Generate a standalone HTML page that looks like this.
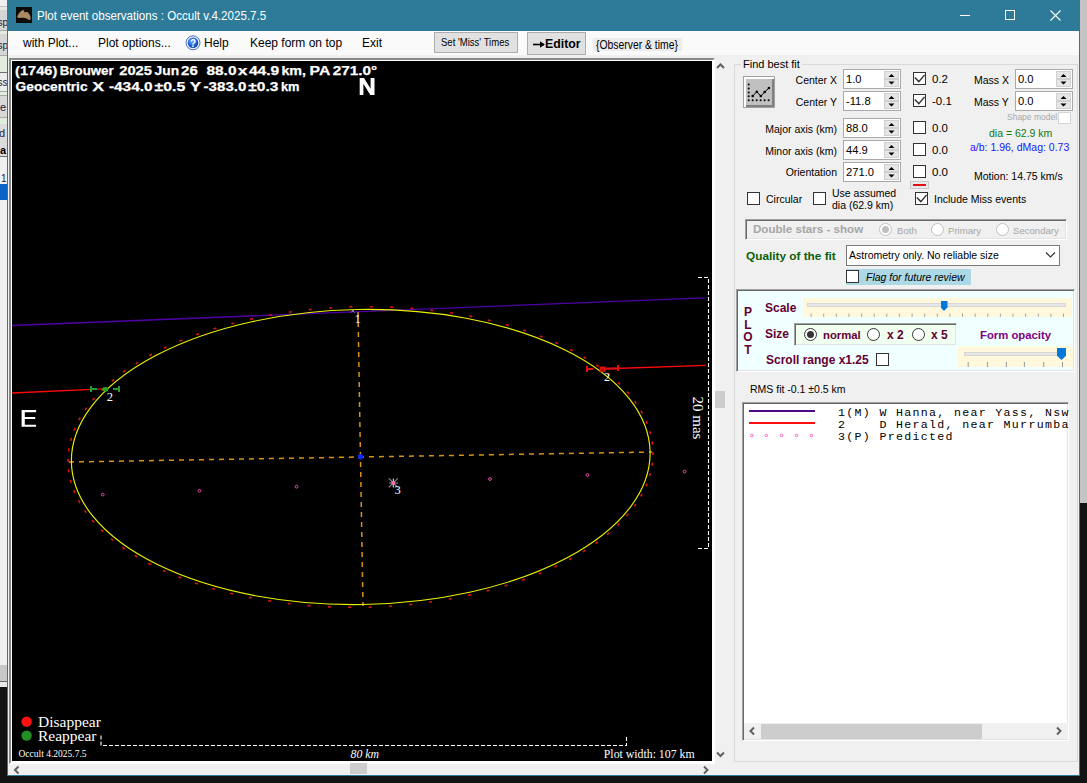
<!DOCTYPE html>
<html><head><meta charset="utf-8">
<style>
*{box-sizing:border-box;margin:0;padding:0}
html,body{width:1087px;height:783px;overflow:hidden;background:#131313;font-family:"Liberation Sans",sans-serif;}
.a{position:absolute;white-space:pre;line-height:1}
.lbl{position:absolute;white-space:pre;font-size:10.5px;color:#000;line-height:12px}
.nud{position:absolute;background:#fff;border:1px solid #a9a9a9;width:58px;height:20px}
.nud .t{position:absolute;left:2px;top:3px;font-size:11.2px;line-height:13px;color:#000}
.nud .sp{position:absolute;right:1px;top:1px;width:15px;height:16px}
.nud .sp div{position:absolute;left:0;width:15px;height:8px;background:#e6e6e6;border:1px solid #d0d0d0}
.cb{position:absolute;width:13px;height:13px;border:1px solid #333;background:#fff}

.f3d{border:1px solid;border-color:#a0a0a0 #fff #fff #a0a0a0;box-shadow:inset 1px 1px 0 #696969,inset -1px -1px 0 #e3e3e3}
.rb{position:absolute;width:13px;height:13px;border-radius:50%;border:1px solid #333;background:#fff}
</style></head><body>

<!-- left background window strip -->
<div class="a" style="left:0;top:0;width:7px;height:687px;background:#efefef;overflow:hidden">
 <div class="a" style="left:0;top:6px;width:7px;height:1px;background:#c4c4c4"></div>
 <div class="a" style="left:0;top:7px;width:7px;height:3px;background:#e2ede0"></div>
 <div class="a" style="left:0;top:10px;width:7px;height:20px;background:#d6d6d6"></div>
 <div class="a" style="left:-2.5px;top:18px;font-size:10px;color:#202040">sp</div>
 <div class="a" style="left:0;top:30px;width:7px;height:1px;background:#a8a8a8"></div>
 <div class="a" style="left:0;top:31px;width:7px;height:3px;background:#e2ede0"></div>
 <div class="a" style="left:0;top:34px;width:7px;height:21px;background:#d6d6d6"></div>
 <div class="a" style="left:-2.5px;top:41px;font-size:10px;color:#202040">sp</div>
 <div class="a" style="left:0;top:55px;width:7px;height:1px;background:#a8a8a8"></div>
 <div class="a" style="left:0;top:56px;width:7px;height:16px;background:#e2ede0"></div>
 <div class="a" style="left:0;top:72px;width:7px;height:1px;background:#707070"></div>
 <div class="a" style="left:0;top:73px;width:7px;height:18px;background:#ececec"></div>
 <div class="a" style="left:-2.5px;top:78px;font-size:10px;color:#202040">ss</div>
 <div class="a" style="left:0;top:91px;width:7px;height:1px;background:#a8a8a8"></div>
 <div class="a" style="left:0;top:92px;width:7px;height:3px;background:#e2ede0"></div>
 <div class="a" style="left:0;top:95px;width:7px;height:1px;background:#a8a8a8"></div>
 <div class="a" style="left:0;top:96px;width:7px;height:21px;background:#d8d8d8"></div>
 <div class="a" style="left:0;top:102px;font-size:11px;color:#202040">e</div>
 <div class="a" style="left:0;top:117px;width:7px;height:1px;background:#a8a8a8"></div>
 <div class="a" style="left:0;top:118px;width:7px;height:6px;background:#e2ede0"></div>
 <div class="a" style="left:0;top:124px;width:7px;height:32px;background:#dcdcdc"></div>
 <div class="a" style="left:-1px;top:128px;font-size:11px;color:#202040">d</div>
 <div class="a" style="left:0;top:145px;font-size:11px;font-weight:bold;color:#000">a</div>
 <div class="a" style="left:0;top:156px;width:7px;height:1px;background:#707070"></div>
 <div class="a" style="left:1px;top:174px;font-size:10px;color:#202040">1</div>
 <div class="a" style="left:0;top:184px;width:7px;height:16px;background:#0a64c8"></div>
 <div class="a" style="left:0;top:665px;width:7px;height:16px;background:#c8c8c8"></div>
 <div class="a" style="left:0;top:681px;width:7px;height:1px;background:#606070"></div>
 <div class="a" style="left:0;top:682px;width:7px;height:5px;background:#e8e8e8"></div>
</div>

<!-- right gray strip -->
<div class="a" style="left:1080px;top:0;width:7px;height:503px;background:#c4c4c4"></div>

<!-- window -->
<div class="a" style="left:7px;top:0;width:1073px;height:776px;background:#f0f0f0;border:1px solid #2e7b99;border-top:none"></div>
<!-- title bar -->
<div class="a" style="left:7px;top:0;width:1073px;height:31px;background:#2e7b99"></div>
<div class="a" style="left:16px;top:7px;width:16px;height:16px;background:#0e0c08"></div>
<svg class="a" style="left:16px;top:7px" width="16" height="16"><path d="M1.1 9.8C2 7 4.5 4 7 3 8 3 8.2 5 8.8 5.4 9.5 5 10.5 4.6 11.6 5.2 13.5 6.5 14.5 9 14.6 11 14.6 12.5 14 13.2 13.5 13 11.5 12 9.5 10.8 7.8 10.8 5.5 10.8 3 11 1.8 10.8Z" fill="#ab8a62"/></svg>
<div class="a" style="left:37px;top:9.6px;font-size:12.8px;color:#fff;transform:scaleX(0.906);transform-origin:0 0">Plot event observations : Occult v.4.2025.7.5</div>
<div class="a" style="left:960px;top:15px;width:10px;height:1px;background:#fff"></div>
<div class="a" style="left:1005px;top:10px;width:10px;height:10px;border:1px solid #fff"></div>
<svg class="a" style="left:1050px;top:10px" width="11" height="11"><path d="M0.5 0.5L10.5 10.5M10.5 0.5L0.5 10.5" stroke="#fff" stroke-width="1.1"/></svg>

<!-- menu strip -->
<div class="a" style="left:8px;top:31px;width:1071px;height:24px;background:#fafafa"></div>
<div class="a" style="left:23px;top:37px;font-size:12px;color:#000">with Plot...</div>
<div class="a" style="left:98px;top:37px;font-size:12px;color:#000">Plot options...</div>
<svg class="a" style="left:185px;top:35px" width="16" height="16"><defs><radialGradient id="hg" cx="40%" cy="35%" r="70%"><stop offset="0" stop-color="#6aa8ff"/><stop offset="0.6" stop-color="#1e5fd8"/><stop offset="1" stop-color="#123c9a"/></radialGradient></defs>
<circle cx="8" cy="7.8" r="7" fill="#e8eefc" stroke="#4a74c4" stroke-width="1"/><circle cx="8" cy="7.8" r="5.3" fill="url(#hg)"/>
<text x="8" y="11.6" text-anchor="middle" font-family="Liberation Sans" font-weight="bold" font-size="10" fill="#fff">?</text></svg>

<div class="a" style="left:204px;top:37px;font-size:12px;color:#000">Help</div>
<div class="a" style="left:250px;top:37px;font-size:12px;color:#000">Keep form on top</div>
<div class="a" style="left:362px;top:37px;font-size:12px;color:#000">Exit</div>
<div class="a" style="left:434px;top:32px;width:84px;height:21px;background:#e1e1e1;border:1px solid #adadad"></div>
<div class="a" style="left:441px;top:37.5px;font-size:10.3px;color:#000;transform:scaleX(0.925);transform-origin:0 0">Set 'Miss' Times</div>
<div class="a" style="left:527px;top:32px;width:59px;height:23px;background:#e1e1e1;border:1px solid #adadad"></div>
<svg class="a" style="left:532px;top:40px" width="14" height="9"><path d="M1 4.5H12" stroke="#000" stroke-width="1.6"/><path d="M8 1.2L12.8 4.5 8 7.8Z" fill="#000"/></svg>
<div class="a" style="left:545px;top:38px;font-size:12.3px;font-weight:bold;color:#000">Editor</div>
<div class="a" style="left:593px;top:38px;width:89px;height:13px;background:#ececec"></div>
<div class="a" style="left:595.5px;top:39px;font-size:12px;color:#000;transform:scaleX(0.865);transform-origin:0 0">{Observer &amp; time}</div>

<!-- picture box -->
<div class="a" style="left:9px;top:58px;width:706px;height:706px;border-top:2px solid #888;border-left:2px solid #888;border-right:2px solid #fff;border-bottom:2px solid #fff"></div>
<div class="a" style="left:11px;top:60px;width:702px;height:702px;border:1px solid #fff;background:#000"></div>

<svg class="a" style="left:0;top:0" width="1087" height="783">
 <defs><clipPath id="pc"><rect x="12" y="61" width="700" height="700"/></clipPath></defs>
 <g clip-path="url(#pc)">
  <!-- observer chords -->
  <line x1="12" y1="325.5" x2="705.5" y2="297.8" stroke="#5000a8" stroke-width="1.3"/>
  <line x1="12" y1="393" x2="103" y2="388.8" stroke="#ff0a0a" stroke-width="1.3"/>
  <line x1="600" y1="369" x2="705.5" y2="365.4" stroke="#ff0a0a" stroke-width="1.3"/>
  <!-- axes -->
  <line x1="69" y1="462" x2="652" y2="452" stroke="#d89018" stroke-width="1.5" stroke-dasharray="5,5"/>
  <line x1="358" y1="312" x2="363" y2="606" stroke="#d89018" stroke-width="1.5" stroke-dasharray="5,5"/>
  <!-- predicted dashed ellipse -->
  <path d="M647.3 423.8l-1.1 -2.8M642.5 413.6l-1.5 -2.6M636.4 403.6l-1.7 -2.4M628.9 393.9l-2.0 -2.3M620.1 384.4l-2.2 -2.1M610.0 375.4l-2.3 -1.9M598.7 366.7l-2.5 -1.7M586.2 358.5l-2.6 -1.5M572.7 350.8l-2.7 -1.4M558.0 343.6l-2.7 -1.2M542.5 337.0l-2.8 -1.1M526.0 330.9l-2.8 -1.0M508.7 325.5l-2.9 -0.8M490.7 320.7l-2.9 -0.7M472.1 316.6l-2.9 -0.6M453.0 313.2l-3.0 -0.5M433.4 310.5l-3.0 -0.3M413.4 308.5l-3.0 -0.2M393.2 307.2l-3.0 -0.1M372.9 306.7l-3.0 -0.0M352.4 306.8l-3.0 0.1M332.1 307.8l-3.0 0.2M311.8 309.4l-3.0 0.3M291.9 311.8l-3.0 0.4M272.2 314.8l-3.0 0.5M253.0 318.6l-2.9 0.6M234.3 323.0l-2.9 0.8M216.3 328.1l-2.9 0.9M198.9 333.8l-2.8 1.0M182.3 340.1l-2.8 1.1M166.6 346.9l-2.7 1.3M151.9 354.3l-2.6 1.4M138.1 362.2l-2.5 1.6M125.5 370.5l-2.4 1.7M114.0 379.3l-2.3 1.9M103.6 388.4l-2.1 2.1M94.6 397.9l-2.0 2.3M86.8 407.6l-1.7 2.5M80.3 417.5l-1.5 2.6M75.1 427.7l-1.1 2.8M71.4 438.0l-0.8 2.9M69.0 448.4l-0.4 3.0M68.0 458.9l-0.0 3.0M68.5 469.4l0.4 3.0M70.4 479.9l0.8 2.9M73.7 490.2l1.1 2.8M78.5 500.4l1.5 2.6M84.6 510.4l1.7 2.4M92.1 520.1l2.0 2.3M100.9 529.6l2.2 2.1M111.0 538.6l2.3 1.9M122.3 547.3l2.5 1.7M134.8 555.5l2.6 1.5M148.3 563.2l2.7 1.4M163.0 570.4l2.7 1.2M178.5 577.0l2.8 1.1M195.0 583.1l2.8 1.0M212.3 588.5l2.9 0.8M230.3 593.3l2.9 0.7M248.9 597.4l2.9 0.6M268.0 600.8l3.0 0.5M287.6 603.5l3.0 0.3M307.6 605.5l3.0 0.2M327.8 606.8l3.0 0.1M348.1 607.3l3.0 0.0M368.6 607.2l3.0 -0.1M388.9 606.2l3.0 -0.2M409.2 604.6l3.0 -0.3M429.1 602.2l3.0 -0.4M448.8 599.2l3.0 -0.5M468.0 595.4l2.9 -0.6M486.7 591.0l2.9 -0.8M504.7 585.9l2.9 -0.9M522.1 580.2l2.8 -1.0M538.7 573.9l2.8 -1.1M554.4 567.1l2.7 -1.3M569.1 559.7l2.6 -1.4M582.9 551.8l2.5 -1.6M595.5 543.5l2.4 -1.7M607.0 534.7l2.3 -1.9M617.4 525.6l2.1 -2.1M626.4 516.1l2.0 -2.3M634.2 506.4l1.7 -2.5M640.7 496.5l1.5 -2.6M645.9 486.3l1.1 -2.8M649.6 476.0l0.8 -2.9M652.0 465.6l0.4 -3.0M653.0 455.1l0.0 -3.0M652.5 444.6l-0.4 -3.0M650.6 434.1l-0.8 -2.9" stroke="#e01010" stroke-width="1.6" fill="none"/>
  <!-- fitted ellipse -->
  <ellipse cx="360.75" cy="457" rx="289.4" ry="147.5" transform="rotate(-1 360.75 457)" fill="none" stroke="#e8f000" stroke-width="1.15"/>
  <!-- center -->
  <circle cx="360.5" cy="456.8" r="2.7" fill="#1028f0"/>
  <!-- predicted dots -->
  <g fill="none" stroke="#e050a8" stroke-width="1">
   <circle cx="102.7" cy="494.6" r="1.4"/><circle cx="199.5" cy="490.7" r="1.4"/><circle cx="296.5" cy="486.7" r="1.4"/>
   <circle cx="490" cy="479" r="1.4"/><circle cx="587.5" cy="475" r="1.4"/><circle cx="684.6" cy="471.5" r="1.4"/>
  </g>
  <!-- star 3 -->
  <g stroke="#8a8a8a" stroke-width="1.2"><path d="M388.8 478.3l9 9M397.8 478.3l-9 9M389 483h9"/></g>
  <path d="M393.3 478.5v9" stroke="#e8e8f0" stroke-width="1"/>
  <circle cx="393.3" cy="482.9" r="2" fill="#ff70b8"/>
  <!-- event markers -->
  <g stroke="#2a9a2a" stroke-width="2"><path d="M91 386v6M91 389h6M119 386v6M113 389h6"/></g>
  <ellipse cx="105.3" cy="389.2" rx="3" ry="2.3" fill="#22aa22"/>
  <g stroke="#e01010" stroke-width="2"><path d="M587 366v6M587 369h6M618 365v6M604 368.5h14"/></g>
  <rect x="600.3" y="367.3" width="4.6" height="3.8" fill="none" stroke="#e01010" stroke-width="1.5"/>
  <!-- small x near 1 -->
  <path d="M351 309l3.5 3.5M354.5 309l-3.5 3.5" stroke="#bbb" stroke-width="0.8"/>
  <!-- scale bars -->
  <path d="M698 277.5H708.5V548.5H698" fill="none" stroke="#fff" stroke-width="1.1" stroke-dasharray="4,2"/>
  <path d="M101 735.5V745.5H626.5V736" fill="none" stroke="#fff" stroke-width="1.1" stroke-dasharray="4,2"/>
  <!-- legend dots -->
  <circle cx="26.6" cy="721.6" r="5.2" fill="#ff1010"/>
  <circle cx="26.6" cy="735.6" r="5.2" fill="#239023"/>
 </g>
 <g font-family="Liberation Serif" fill="#fff">
  <text x="354.5" y="323" font-size="13">1</text>
  <text x="106.8" y="401" font-size="12.5">2</text>
  <text x="604" y="381" font-size="12">2</text>
  <text x="394.6" y="494" font-size="12.5">3</text>
  <text x="38" y="727" font-size="15.5">Disappear</text>
  <text x="38" y="741" font-size="15.5">Reappear</text>
  <text x="18.5" y="757" font-size="9.5">Occult 4.2025.7.5</text>
  <text x="350.5" y="758" font-size="11.75" font-style="italic">80 km</text>
  <text x="603.8" y="758" font-size="11.8">Plot width: 107 km</text>
  <text transform="translate(692.5 396.5) rotate(90)" font-size="15">20 mas</text>
 </g>
 <g font-family="Liberation Sans" font-weight="bold" fill="#fff" font-size="13.5" stroke="#fff" stroke-width="0.25">
  <text x="15.10" y="75" textLength="42.20" lengthAdjust="spacingAndGlyphs">(1746)</text>
  <text x="59.80" y="75" textLength="53.80" lengthAdjust="spacingAndGlyphs">Brouwer</text>
  <text x="119.20" y="75" textLength="32.80" lengthAdjust="spacingAndGlyphs">2025</text>
  <text x="154.50" y="75" textLength="24.60" lengthAdjust="spacingAndGlyphs">Jun</text>
  <text x="181.00" y="75" textLength="16.80" lengthAdjust="spacingAndGlyphs">26</text>
  <text x="206.40" y="75" textLength="30.10" lengthAdjust="spacingAndGlyphs">88.0</text>
  <text x="237.80" y="75" textLength="9.70" lengthAdjust="spacingAndGlyphs">x</text>
  <text x="248.90" y="75" textLength="30.30" lengthAdjust="spacingAndGlyphs">44.9</text>
  <text x="281.40" y="75" textLength="24.60" lengthAdjust="spacingAndGlyphs">km,</text>
  <text x="309.60" y="75" textLength="20.70" lengthAdjust="spacingAndGlyphs">PA</text>
  <text x="332.70" y="75" textLength="44.50" lengthAdjust="spacingAndGlyphs">271.0°</text>
  <text x="15.60" y="90.5" textLength="72.00" lengthAdjust="spacingAndGlyphs">Geocentric</text>
  <text x="92.30" y="90.5" textLength="11.90" lengthAdjust="spacingAndGlyphs">X</text>
  <text x="108.90" y="90.5" textLength="43.70" lengthAdjust="spacingAndGlyphs">-434.0</text>
  <text x="154.50" y="90.5" textLength="30.90" lengthAdjust="spacingAndGlyphs">±0.5</text>
  <text x="189.80" y="90.5" textLength="11.40" lengthAdjust="spacingAndGlyphs">Y</text>
  <text x="203.60" y="90.5" textLength="42.80" lengthAdjust="spacingAndGlyphs">-383.0</text>
  <text x="248.30" y="90.5" textLength="30.10" lengthAdjust="spacingAndGlyphs">±0.3</text>
  <text x="280.90" y="90.5" textLength="18.50" lengthAdjust="spacingAndGlyphs">km</text>
 </g>
 <path d="M359.7 77.9H364L370.6 88.8V77.9H374.5V94.9H370.3L363.4 83.8V94.9H359.7Z" fill="#fff"/>
 <path d="M21.6 410.1H36.1V412.2H24.8V417H35.2V419.1H24.8V424.7H36.1V426.8H21.6Z" fill="#fff"/>
</svg>

<!-- vertical scrollbar of left panel -->
<svg class="a" style="left:714px;top:61px" width="14" height="10"><path d="M3 7l3.5-3.5 3.5 3.5" fill="none" stroke="#606060" stroke-width="2"/></svg>
<svg class="a" style="left:714px;top:750px" width="14" height="10"><path d="M3 2.5l3.5 3.5 3.5-3.5" fill="none" stroke="#606060" stroke-width="2"/></svg>
<div class="a" style="left:715px;top:391px;width:10px;height:17px;background:#cdcdcd"></div>
<!-- horizontal scrollbar -->
<svg class="a" style="left:11px;top:764px" width="12" height="12"><path d="M7.5 2.5l-3.5 3.5 3.5 3.5" fill="none" stroke="#606060" stroke-width="2"/></svg>
<svg class="a" style="left:700px;top:764px" width="12" height="12"><path d="M4 2.5l3.5 3.5-3.5 3.5" fill="none" stroke="#606060" stroke-width="2"/></svg>
<div class="a" style="left:350px;top:763px;width:17px;height:11px;background:#cdcdcd"></div>

<!-- right panel separator -->


<!-- Find best fit group -->
<div class="a" style="left:734px;top:64px;width:344px;height:698px;border:1px solid #d9d9d9"></div>
<div class="a" style="left:741px;top:58px;padding:0 2px;background:#f0f0f0;font-size:11px;line-height:12px;color:#000">Find best fit</div>
<!-- best fit button -->
<div class="a" style="left:743px;top:76px;width:32px;height:32px;border:1px solid #a0a0a0;background:#c0c0c0;box-shadow:inset 2px 2px 0 #fff,inset -2px -2px 0 #808080"></div>
<svg class="a" style="left:743px;top:76px" width="32" height="32">
 <g fill="#000"><circle cx="5.7" cy="8.6" r="1"/><circle cx="5.7" cy="12.5" r="1"/><circle cx="5.7" cy="16.4" r="1"/><circle cx="5.7" cy="20.3" r="1"/><circle cx="5.7" cy="24.3" r="1"/>
 <circle cx="9.7" cy="24.3" r="1"/><circle cx="13.7" cy="24.3" r="1"/><circle cx="17.6" cy="24.3" r="1"/><circle cx="21.6" cy="24.3" r="1"/><circle cx="25.6" cy="24.3" r="1"/>
 <circle cx="9.7" cy="20" r="1.3"/><circle cx="13.8" cy="15.8" r="1.3"/><circle cx="17.8" cy="20" r="1.3"/><circle cx="21.7" cy="16" r="1.3"/><circle cx="25.9" cy="12" r="1.3"/></g>
 <path d="M9.7 20L13.8 15.8 17.8 20 21.7 16 25.9 12" fill="none" stroke="#000" stroke-width="1"/>
</svg>

<div class="lbl" style="right:250px;top:74px">Center X</div>
<div class="lbl" style="right:250px;top:96px">Center Y</div>
<div class="lbl" style="right:250px;top:123px">Major axis (km)</div>
<div class="lbl" style="right:250px;top:145px">Minor axis (km)</div>
<div class="lbl" style="right:250px;top:166px">Orientation</div>

<div class="nud" style="left:843px;top:69px"><div class="t">1.0</div><div class="sp"><div style="top:0"></div><div style="top:8px"></div><svg style="position:absolute;left:0;top:0" width="15" height="17"><path d="M4.5 6L7.5 3 10.5 6ZM4.5 10.5L7.5 13.5 10.5 10.5Z" fill="#000"/></svg></div></div>
<div class="nud" style="left:843px;top:91px"><div class="t">-11.8</div><div class="sp"><div style="top:0"></div><div style="top:8px"></div><svg style="position:absolute;left:0;top:0" width="15" height="17"><path d="M4.5 6L7.5 3 10.5 6ZM4.5 10.5L7.5 13.5 10.5 10.5Z" fill="#000"/></svg></div></div>
<div class="nud" style="left:843px;top:118px"><div class="t">88.0</div><div class="sp"><div style="top:0"></div><div style="top:8px"></div><svg style="position:absolute;left:0;top:0" width="15" height="17"><path d="M4.5 6L7.5 3 10.5 6ZM4.5 10.5L7.5 13.5 10.5 10.5Z" fill="#000"/></svg></div></div>
<div class="nud" style="left:843px;top:140px"><div class="t">44.9</div><div class="sp"><div style="top:0"></div><div style="top:8px"></div><svg style="position:absolute;left:0;top:0" width="15" height="17"><path d="M4.5 6L7.5 3 10.5 6ZM4.5 10.5L7.5 13.5 10.5 10.5Z" fill="#000"/></svg></div></div>
<div class="nud" style="left:843px;top:162px"><div class="t">271.0</div><div class="sp"><div style="top:0"></div><div style="top:8px"></div><svg style="position:absolute;left:0;top:0" width="15" height="17"><path d="M4.5 6L7.5 3 10.5 6ZM4.5 10.5L7.5 13.5 10.5 10.5Z" fill="#000"/></svg></div></div>
<div class="nud" style="left:1015px;top:69px"><div class="t">0.0</div><div class="sp"><div style="top:0"></div><div style="top:8px"></div><svg style="position:absolute;left:0;top:0" width="15" height="17"><path d="M4.5 6L7.5 3 10.5 6ZM4.5 10.5L7.5 13.5 10.5 10.5Z" fill="#000"/></svg></div></div>
<div class="nud" style="left:1015px;top:91px"><div class="t">0.0</div><div class="sp"><div style="top:0"></div><div style="top:8px"></div><svg style="position:absolute;left:0;top:0" width="15" height="17"><path d="M4.5 6L7.5 3 10.5 6ZM4.5 10.5L7.5 13.5 10.5 10.5Z" fill="#000"/></svg></div></div>

<div class="cb" style="left:913px;top:72px"><svg style="position:absolute;left:0;top:0" width="11" height="11"><path d="M0.8 4.6L4.8 8.6 10.6 1.9" fill="none" stroke="#333" stroke-width="1.4"/></svg></div>
<div class="cb" style="left:913px;top:94px"><svg style="position:absolute;left:0;top:0" width="11" height="11"><path d="M0.8 4.6L4.8 8.6 10.6 1.9" fill="none" stroke="#333" stroke-width="1.4"/></svg></div>
<div class="cb" style="left:913px;top:121px"></div>
<div class="cb" style="left:913px;top:143px"></div>
<div class="cb" style="left:913px;top:165px"></div>
<div class="lbl" style="left:932px;top:73px;font-size:11.5px">0.2</div>
<div class="lbl" style="left:932px;top:95px;font-size:11.5px">-0.1</div>
<div class="lbl" style="left:932px;top:122px;font-size:11.5px">0.0</div>
<div class="lbl" style="left:932px;top:144px;font-size:11.5px">0.0</div>
<div class="lbl" style="left:932px;top:166px;font-size:11.5px">0.0</div>
<div class="a" style="left:910px;top:181px;width:19px;height:8px;border:1px solid #c8c8c8;background:#e8e8e8"></div>
<div class="a" style="left:913px;top:184px;width:13px;height:2px;background:#e01010"></div>

<div class="lbl" style="left:974px;top:74px">Mass X</div>
<div class="lbl" style="left:974px;top:96px">Mass Y</div>
<div class="lbl" style="left:1007px;top:111px;font-size:8.5px;color:#a8a8a8">Shape model</div>
<div class="a" style="left:1058px;top:112px;width:13px;height:12px;border:1px solid #d4d4d4;background:#fff"></div>
<div class="lbl" style="left:989px;top:126.5px;color:#0f7a0f">dia = 62.9 km</div>
<div class="lbl" style="left:970px;top:140.5px;color:#1818ff">a/b: 1.96, dMag: 0.73</div>
<div class="lbl" style="left:974px;top:170px">Motion: 14.75 km/s</div>

<div class="cb" style="left:747px;top:192px"></div>
<div class="lbl" style="left:766px;top:193px">Circular</div>
<div class="cb" style="left:813px;top:192px"></div>
<div class="lbl" style="left:832px;top:187px">Use assumed</div>
<div class="lbl" style="left:832px;top:199px">dia (62.9 km)</div>
<div class="cb" style="left:915px;top:192px"><svg style="position:absolute;left:0;top:0" width="11" height="11"><path d="M0.8 4.6L4.8 8.6 10.6 1.9" fill="none" stroke="#333" stroke-width="1.4"/></svg></div>
<div class="lbl" style="left:934px;top:193px">Include Miss events</div>

<!-- Double stars panel -->
<div class="a f3d" style="left:745px;top:219px;width:322px;height:21px"></div>
<div class="a" style="left:753px;top:223px;font-size:11.6px;font-weight:bold;color:#a6a6a6">Double stars - show</div>
<div class="rb" style="left:879px;top:223px;border-color:#c0c0c0"></div>
<div class="a" style="left:882px;top:226px;width:7px;height:7px;border-radius:50%;background:#c0c0c0"></div>
<div class="lbl" style="left:897px;top:225px;color:#a6a6a6;font-size:9.6px">Both</div>
<div class="rb" style="left:931px;top:223px;border-color:#c0c0c0"></div>
<div class="lbl" style="left:948px;top:225px;color:#a6a6a6;font-size:9.6px">Primary</div>
<div class="rb" style="left:996px;top:223px;border-color:#c0c0c0"></div>
<div class="lbl" style="left:1013px;top:225px;color:#a6a6a6;font-size:9.6px">Secondary</div>

<div class="a" style="left:746px;top:250.5px;font-size:11.8px;font-weight:bold;color:#0a5f0a">Quality of the fit</div>
<div class="a" style="left:846px;top:245px;width:214px;height:21px;background:#fff;border:1px solid #7a7a7a"></div>
<div class="lbl" style="left:849px;top:249px">Astrometry only. No reliable size</div>
<svg class="a" style="left:1045px;top:251px" width="12" height="8"><path d="M1 1.5l4.5 4.5 4.5-4.5" fill="none" stroke="#333" stroke-width="1.2"/></svg>
<div class="a" style="left:846px;top:269px;width:125px;height:16px;background:#add8e6"></div>
<div class="cb" style="left:846px;top:270px"></div>
<div class="lbl" style="left:866px;top:271px;font-style:italic">Flag for future review</div>


<!-- PLOT panel -->
<div class="a f3d" style="left:736px;top:289px;width:339px;height:83px;background:#f0ffff"></div>
<div class="a" style="left:742px;top:306px;width:12px;font-size:12px;font-weight:bold;color:#660033;line-height:12.5px;text-align:center;white-space:normal">P L O T</div>
<div class="a" style="left:765px;top:302px;font-size:12px;font-weight:bold;color:#660033">Scale</div>
<div class="a" style="left:803px;top:298px;width:269px;height:19px;background:#fff8dc"></div>
<div class="a" style="left:807px;top:303px;width:259px;height:4px;background:#e7e7e7;border:1px solid #d6d6d6"></div>
<div class="a" style="left:940.5px;top:300.5px;width:7px;height:10.5px;background:#0078d7;clip-path:polygon(0 0,100% 0,100% 65%,50% 100%,0 65%)"></div>
<svg class="a" style="left:803px;top:313px" width="270" height="5"><path d="M8.1 0.5v3.5M20.7 0.5v3.5M33.3 0.5v3.5M46.0 0.5v3.5M58.6 0.5v3.5M71.2 0.5v3.5M83.8 0.5v3.5M96.4 0.5v3.5M109.1 0.5v3.5M121.7 0.5v3.5M134.3 0.5v3.5M146.9 0.5v3.5M159.5 0.5v3.5M172.2 0.5v3.5M184.8 0.5v3.5M197.4 0.5v3.5M210.0 0.5v3.5M222.6 0.5v3.5M235.3 0.5v3.5M247.9 0.5v3.5M260.5 0.5v3.5" stroke="#a8a8a8" stroke-width="1"/></svg>
<div class="a" style="left:765px;top:328px;font-size:12px;font-weight:bold;color:#660033">Size</div>
<div class="a f3d" style="left:794px;top:323px;width:163px;height:23px;background:#f0fff0;border-bottom-color:#f0ffff;border-right-color:#f0ffff"></div>
<div class="rb" style="left:804px;top:328px"></div>
<div class="a" style="left:807px;top:331px;width:7px;height:7px;border-radius:50%;background:#333"></div>
<div class="a" style="left:823px;top:329.5px;font-size:11.3px;font-weight:bold;color:#660033">normal</div>
<div class="rb" style="left:867px;top:328px"></div>
<div class="a" style="left:887px;top:329px;font-size:12px;font-weight:bold;color:#660033">x 2</div>
<div class="rb" style="left:912px;top:328px"></div>
<div class="a" style="left:931px;top:329px;font-size:12px;font-weight:bold;color:#660033">x 5</div>
<div class="a" style="left:980px;top:330px;font-size:11.3px;font-weight:bold;color:#800080">Form opacity</div>
<div class="a" style="left:958px;top:346px;width:115px;height:21px;background:#fff8dc"></div>
<div class="a" style="left:964px;top:352px;width:102px;height:4px;background:#e7e7e7;border:1px solid #d6d6d6"></div>
<div class="a" style="left:1057px;top:348px;width:9px;height:12px;background:#0078d7;clip-path:polygon(0 0,100% 0,100% 65%,50% 100%,0 65%)"></div>
<svg class="a" style="left:958px;top:361px" width="115" height="6"><path d="M10.2 1v5M29.4 1v5M48.3 1v5M66.4 1v5M85.7 1v5M104.5 1v5" stroke="#999" stroke-width="1"/></svg>
<div class="a" style="left:766px;top:354px;font-size:12px;font-weight:bold;color:#660033">Scroll range x1.25</div>
<div class="cb" style="left:876px;top:353px"></div>

<div class="lbl" style="left:750px;top:383px">RMS fit -0.1 ±0.5 km</div>

<!-- legend listbox -->
<div class="a f3d" style="left:742px;top:402px;width:327px;height:339px;background:#fff"></div>
<div class="a" style="left:749px;top:410px;width:66px;height:2px;background:#4a0a8a"></div>
<div class="a" style="left:749px;top:422px;width:66px;height:2px;background:#ff1010"></div>
<svg class="a" style="left:745px;top:430px" width="75" height="10"><g fill="none" stroke="#ff60c0" stroke-width="1"><circle cx="6.8" cy="5.5" r="1.3"/><circle cx="21.3" cy="5.5" r="1.3"/><circle cx="36.5" cy="5.5" r="1.3"/><circle cx="51.5" cy="5.5" r="1.3"/><circle cx="66.4" cy="5.5" r="1.3"/></g></svg>
<div class="a" style="left:838px;top:407px;font-family:'Liberation Mono',monospace;font-size:11.6px;letter-spacing:1.32px;line-height:11.75px;color:#000">1(M) W Hanna, near Yass, Nsw
2    D Herald, near Murrumba
3(P) Predicted</div>
<div class="a" style="left:744px;top:723px;width:324px;height:16px;background:#f0f0f0"></div>
<div class="a" style="left:761px;top:724px;width:221px;height:15px;background:#cdcdcd"></div>
<svg class="a" style="left:746px;top:725px" width="12" height="12"><path d="M8 2.5l-3.5 3.5 3.5 3.5" fill="none" stroke="#606060" stroke-width="2"/></svg>
<svg class="a" style="left:1053px;top:725px" width="12" height="12"><path d="M4 2.5l3.5 3.5-3.5 3.5" fill="none" stroke="#606060" stroke-width="2"/></svg>


</body></html>
